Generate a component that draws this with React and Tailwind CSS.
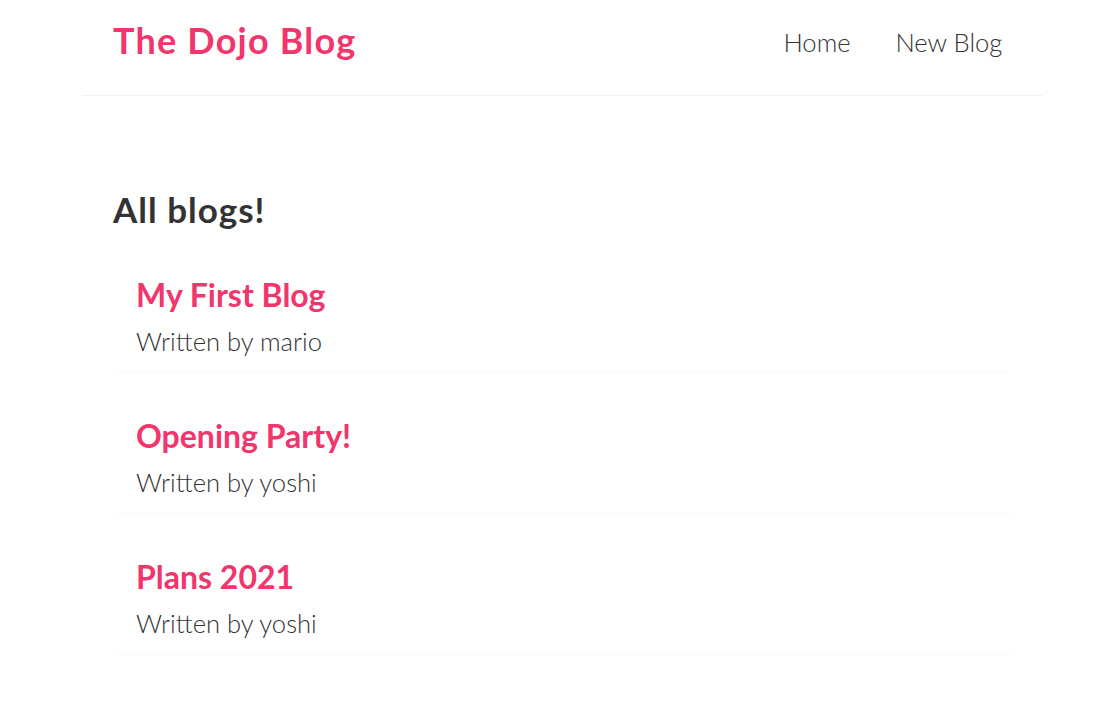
const blogs = [
  { id: 1, title: "My First Blog", author: "mario" },
  { id: 2, title: "Opening Party!", author: "yoshi" },
  { id: 3, title: "Plans 2021", author: "yoshi" },
];

function Navbar() {
  return (
    <nav className="mx-auto flex h-[96px] max-w-[961px] items-start border-b border-[#f2f2f2] px-[31px] pt-[20px]">
      <h1 className="text-[36px] font-bold leading-[40px] tracking-[1.2px] text-[#f1356d]">The Dojo Blog</h1>
      <div className="ml-auto flex pt-[6px]">
        <a href="#" className="ml-[25.6px] px-[9.6px] text-[25.6px] font-light leading-[32px] text-[#333]">
          Home
        </a>
        <a href="#" className="ml-[25.6px] px-[9.6px] text-[25.6px] font-light leading-[32px] text-[#333]">
          New Blog
        </a>
      </div>
    </nav>
  );
}

function BlogPreview({ blog }) {
  return (
    <div className="border-b border-[#fafafa] px-[23px] pt-[16px] pb-[15px]">
      <h2 className="mb-[14px] text-[32px] font-bold leading-[32px] text-[#f1356d]">{blog.title}</h2>
      <p className="text-[25.6px] font-light leading-[32px] text-[#333]">Written by {blog.author}</p>
    </div>
  );
}

export default function App() {
  return (
    <div className="min-h-screen bg-white pl-[5px] font-['Lato',sans-serif] text-[#333]">
      <Navbar />
      <main className="mx-auto max-w-[961px] px-[31px] pt-[93px]">
        <h2 className="mb-[34px] text-[35px] font-bold leading-[40px] tracking-[1px] text-[#333]">All blogs!</h2>
        <div className="flex flex-col gap-[31px]">
          {blogs.map((b) => (
            <BlogPreview key={b.id} blog={b} />
          ))}
        </div>
      </main>
    </div>
  );
}
